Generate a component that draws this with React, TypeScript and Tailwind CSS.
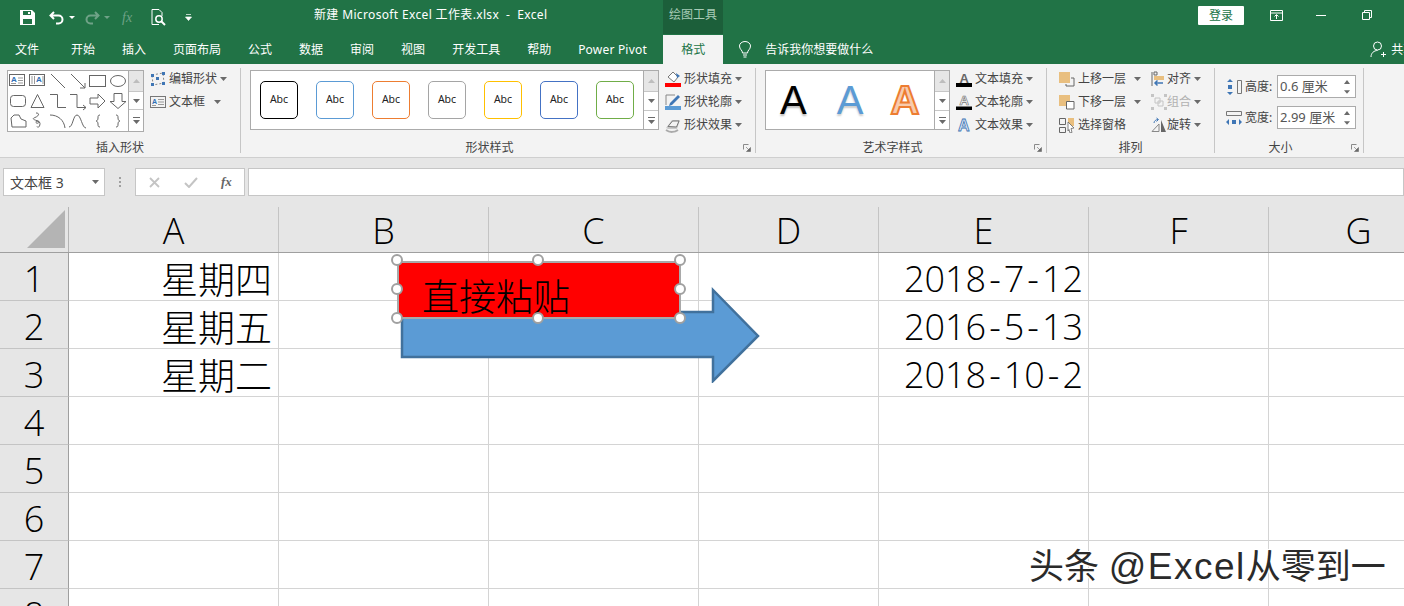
import type { ReactNode } from "react";

const ui = "font-['Noto_Sans','Noto_Sans_CJK_SC',sans-serif]";

function Caret({ className = "" }: { className?: string }) {
  return (
    <svg width="7" height="4" viewBox="0 0 7 4" className={`shrink-0 ${className}`}>
      <path d="M0 0h7L3.5 4z" fill="#6a6a6a" />
    </svg>
  );
}

function TabLabel({ children, className = "" }: { children: ReactNode; className?: string }) {
  return <span className={`shrink-0 text-[12px] text-white whitespace-nowrap ${className}`}>{children}</span>;
}

function TitleBar() {
  return (
    <div className="flex h-[35px] items-start bg-[#217346] text-white">
      <div className="flex w-[314px] shrink-0 items-center pl-[20px] pt-[9px]">
        <svg width="15" height="15" viewBox="0 0 15 15">
          <path d="M0 0h12l3 3v12H0z" fill="#fff" />
          <path d="M3 1h8v4H3zM3 9h9v5H3z" fill="#217346" />
          <path d="M8 2h2v2H8z" fill="#fff" />
        </svg>
        <svg width="16" height="14" viewBox="0 0 16 14" className="ml-[14px]">
          <path d="M5 1 1.5 4.5 5 8M2 4.5h7.5a4 4 0 0 1 0 8H7" fill="none" stroke="#fff" strokeWidth="2" />
        </svg>
        <svg width="6" height="3" viewBox="0 0 6 3" className="ml-[4px]">
          <path d="M0 0h6L3 3z" fill="#fff" />
        </svg>
        <svg width="16" height="14" viewBox="0 0 16 14" className="ml-[9px]">
          <path d="M11 1l3.5 3.5L11 8M14 4.500H6.500a4 4 0 0 0 0 8H9" fill="none" stroke="#6fa287" strokeWidth="2" />
        </svg>
        <svg width="6" height="3" viewBox="0 0 6 3" className="ml-[4px]">
          <path d="M0 0h6L3 3z" fill="#6fa287" />
        </svg>
        <span className="ml-[12px] w-[14px] font-['Liberation_Serif',serif] text-[14px] italic leading-[15px] text-[#6fa287]">fx</span>
        <svg width="16" height="17" viewBox="0 0 16 17" className="ml-[15px]">
          <path d="M1 .5h7l3 3V7M1 .5v15h7" fill="none" stroke="#fff" />
          <circle cx="8" cy="10" r="3.200" fill="none" stroke="#fff" strokeWidth="1.500" />
          <path d="m10.500 12.500 3.500 3.500" stroke="#fff" strokeWidth="2" />
        </svg>
        <svg width="7" height="7" viewBox="0 0 7 7" className="ml-[18px]">
          <path d="M1 .5h5M.5 3h6L3.500 6.500z" fill="#fff" stroke="#fff" strokeWidth=".7" />
        </svg>
      </div>
      <div className="w-[349px] shrink-0 whitespace-nowrap pt-[6px] text-[12px] leading-[18px] tracking-[0.35px]">
        新建 Microsoft Excel 工作表.xlsx&nbsp; -&nbsp; Excel
      </div>
      <div className="flex h-[34px] w-[60px] shrink-0 justify-center bg-[#1c5f3a] pt-[6px] text-[12px] leading-[18px] text-[#a8cbb7]">
        绘图工具
      </div>
      <div className="flex flex-1 items-start pl-[475px] pt-[6px]">
        <div className="flex h-[19px] w-[46px] shrink-0 items-center justify-center rounded-[1px] bg-white text-[12px] text-[#217346]">
          登录
        </div>
        <svg width="13" height="11" viewBox="0 0 13 11" className="ml-[26px] mt-[4px] shrink-0">
          <path d="M.5.500h12v10H.500zM.5 3h12M6.500 9V5M4.500 6.500l2-2 2 2" fill="none" stroke="#fff" />
        </svg>
        <div className="ml-[33px] mt-[9px] h-px w-[10px] shrink-0 bg-white" />
        <svg width="10" height="10" viewBox="0 0 10 10" className="ml-[36px] mt-[4px] shrink-0">
          <path d="M.5 2.500h7v7h-7zM2.500 2.500v-2h7v7h-2" fill="none" stroke="#fff" />
        </svg>
      </div>
    </div>
  );
}

function TabBar() {
  const tabs = ["开始", "插入", "页面布局", "公式", "数据", "审阅", "视图", "开发工具", "帮助"];
  return (
    <div className="flex h-[29px] items-center overflow-hidden bg-[#217346]">
      <TabLabel className="ml-[15px] mr-[32px]">文件</TabLabel>
      <div className="flex shrink-0 gap-[27px]">
        {tabs.map((t) => (
          <TabLabel key={t}>{t}</TabLabel>
        ))}
        <TabLabel className="w-[69px] tracking-[0.2px]">Power Pivot</TabLabel>
      </div>
      <div className="ml-[16px] flex h-full w-[60px] shrink-0 items-center justify-center bg-[#f3f3f3] text-[12px] text-[#217346]">
        格式
      </div>
      <svg width="14" height="17" viewBox="0 0 14 17" className="ml-[15px] shrink-0">
        <path d="M4.500 12c0-3-3-3.500-3-7a5.500 4.500 0 0 1 11 0c0 3.500-3 4-3 7zM5 14h4M5.500 16h3" fill="none" stroke="#fff" />
      </svg>
      <TabLabel className="ml-[13px]">告诉我你想要做什么</TabLabel>
      <svg width="17" height="17" viewBox="0 0 17 17" className="ml-[497px] shrink-0">
        <circle cx="7.500" cy="5" r="4" fill="none" stroke="#fff" />
        <path d="M1 16c0-4 3-6.500 6.500-6.500M11 13.500h5M13.500 11v5" fill="none" stroke="#fff" />
      </svg>
      <TabLabel className="ml-[4px]">共享</TabLabel>
    </div>
  );
}

function Group({
  width,
  label,
  launcher,
  children,
}: {
  width: string;
  label: string;
  launcher?: boolean;
  children: ReactNode;
}) {
  return (
    <div className={`relative mt-[4px] flex h-[85px] shrink-0 flex-col border-r border-[#c6c6c6] ${width}`}>
      <div className="flex flex-1 items-start pt-[2px]">{children}</div>
      <div className={`h-[16px] text-center text-[12px] leading-[22px] text-[#444] ${launcher ? "pr-[17px]" : ""}`}>
        {label}
      </div>
      {launcher && (
        <svg width="8" height="8" viewBox="0 0 8 8" className="absolute bottom-[1px] right-[4px]">
          <path d="M.5 5.500v-5h5" fill="none" stroke="#8a8a8a" />
          <path d="M3 3l3.500 3.500M7.500 3.500v4h-4z" fill="#6a6a6a" stroke="#6a6a6a" strokeWidth=".6" />
        </svg>
      )}
    </div>
  );
}

function ScrollColumn({ tall }: { tall?: boolean }) {
  return (
    <div className="flex w-[15px] shrink-0 flex-col self-stretch border-l border-[#ababab] bg-white">
      <div className="flex h-[21px] items-center justify-center border-b border-[#c6c6c6] bg-[#e6e6e6]">
        <svg width="7" height="4" viewBox="0 0 7 4">
          <path d="M0 4h7L3.500 0z" fill="#bdbdbd" />
        </svg>
      </div>
      <div className={`flex items-center justify-center border-b border-[#c6c6c6] ${tall ? "h-[19px]" : "h-[18px]"}`}>
        <Caret />
      </div>
      <div className="flex flex-1 flex-col items-center justify-center gap-[2px]">
        <div className="h-px w-[7px] bg-[#6a6a6a]" />
        <Caret />
      </div>
    </div>
  );
}

const lineProps = { fill: "none", stroke: "#666", strokeWidth: 1 };

const shapeIcons: ReactNode[] = [
  <>
    <rect x="1.500" y="3.500" width="15" height="11" fill="none" stroke="#666" />
    <text x="3" y="11" fontSize="8" fontWeight="700" fill="#2f6fb5" fontFamily="Liberation Sans">A</text>
    <path d="M10 7h5M10 9.500h5M10 12h5M3 12.500h5" stroke="#999" />
  </>,
  <>
    <rect x="1.500" y="3.500" width="15" height="11" fill="none" stroke="#666" />
    <text x="8" y="11" fontSize="8" fontWeight="700" fill="#2f6fb5" fontFamily="Liberation Sans">A</text>
    <path d="M4 5v8M6.500 5v8M15 5v8" stroke="#999" />
  </>,
  <path d="M3 3l14 14" {...lineProps} />,
  <path d="M3 3l14 14M17 12v5h-5" {...lineProps} />,
  <rect x="1.500" y="4.500" width="16" height="11" {...lineProps} />,
  <ellipse cx="10" cy="10" rx="7.500" ry="5.500" {...lineProps} />,
  <rect x="2.500" y="4.500" width="15" height="11" rx="3" {...lineProps} />,
  <path d="M9.500 3.500 16 16.500H3z" {...lineProps} />,
  <path d="M2 3.500h7.500v13H18" {...lineProps} />,
  <path d="M2 3.500h7v13h9M15 14l3 2.500-3 2.500" {...lineProps} />,
  <path d="M2 7h8V3l7 7-7 7v-4H2z" {...lineProps} />,
  <path d="M6 2.500h8v8h4l-8 7-8-7h4z" {...lineProps} />,
  <path d="M3 7l3-3h5l2 4 5 2v6H4z" {...lineProps} />,
  <path d="M8 2c4 0 3 3-1 4.500s0 2.500 3 3.500-1 3.500-2 1.500 4-2 4 1-2 5-3 3" {...lineProps} />,
  <path d="M2 4c8 0 14 5 15 13" {...lineProps} />,
  <path d="M1 16c4 0 4-12 8-12s5 13 9 13" {...lineProps} />,
  <path d="M12 4c-2 0-2 1-2 3s-1 3-2 3c1 0 2 1 2 3s0 3 2 3" {...lineProps} />,
  <path d="M8 4c2 0 2 1 2 3s1 3 2 3c-1 0-2 1-2 3s0 3-2 3" {...lineProps} />,
];

function Command({ icon, label, caretGap, muted }: { icon: ReactNode; label: string; caretGap: string; muted?: boolean }) {
  return (
    <div className="flex h-[23px] items-center">
      <div className="flex w-[16px] shrink-0 justify-center">{icon}</div>
      <span className={`ml-[3px] whitespace-nowrap text-[12px] ${muted ? "text-[#b1b1b1]" : "text-[#444]"}`}>{label}</span>
      <Caret className={caretGap} />
    </div>
  );
}

function Icon16({ children }: { children: ReactNode }) {
  return (
    <svg width="16" height="16" viewBox="0 0 16 16">
      {children}
    </svg>
  );
}

const letter = { fontFamily: "Liberation Sans", fontWeight: 700, fontSize: 13 };

function InsertShapes() {
  return (
    <>
      <div className="ml-[7px] flex h-[62px] w-[137px] shrink-0 border border-[#ababab] bg-white">
        <div className="grid w-[121px] grid-cols-[repeat(6,20px)] grid-rows-[repeat(3,20px)]">
          {shapeIcons.map((icon, i) => (
            <svg key={i} width="20" height="20" viewBox="0 0 20 20">
              {icon}
            </svg>
          ))}
        </div>
        <ScrollColumn />
      </div>
      <div className="ml-[6px] -mt-[3px] flex flex-col">
        <Command
          label="编辑形状"
          caretGap="ml-[3px]"
          icon={
            <Icon16>
              <path d="M2 4l11-2 1 10-11 2z" fill="none" stroke="#888" strokeDasharray="2 2" />
              <path d="M1 3h3v3H1zM12 1h3v3h-3zM12 11h3v3h-3zM1 12h3v3H1zM6 6h3v3H6z" fill="#3f76b5" />
            </Icon16>
          }
        />
        <Command
          label="文本框"
          caretGap="ml-[9px]"
          icon={
            <Icon16>
              <rect x=".5" y="2.500" width="15" height="11" fill="none" stroke="#777" />
              <text x="2" y="9.500" fontSize="7" fontWeight="700" fill="#2f6fb5" fontFamily="Liberation Sans">A</text>
              <path d="M8 5.500h6M8 8h6M8 10.500h6M2 11.500h4" stroke="#999" />
            </Icon16>
          }
        />
      </div>
    </>
  );
}

function ShapeStyles() {
  const borders = [
    "border-black",
    "border-[#5b9bd5]",
    "border-[#ed7d31]",
    "border-[#a5a5a5]",
    "border-[#ffc000]",
    "border-[#4472c4]",
    "border-[#70ad47]",
  ];
  return (
    <>
      <div className="ml-[9px] flex h-[60px] w-[409px] shrink-0 border border-[#ababab] bg-white">
        <div className="flex flex-1 items-center gap-[18px] pl-[9px]">
          {borders.map((b) => (
            <div
              key={b}
              className={`flex h-[38px] w-[38px] items-center justify-center rounded-[5px] border text-[10.500px] text-[#222] ${b}`}
            >
              Abc
            </div>
          ))}
        </div>
        <ScrollColumn tall />
      </div>
      <div className="ml-[6px] -mt-[3px] flex flex-col">
        <Command
          label="形状填充"
          caretGap="ml-[3px]"
          icon={
            <Icon16>
              <path d="M3 6l5-5 5 5-4 5z" fill="#fff" stroke="#777" />
              <path d="M11 2l4 3-3 2z" fill="#3f76b5" />
              <path d="M0 12h16v4H0z" fill="#f00" />
            </Icon16>
          }
        />
        <Command
          label="形状轮廓"
          caretGap="ml-[3px]"
          icon={
            <Icon16>
              <path d="M1 1h9M1 1v10" stroke="#888" fill="none" />
              <path d="M5 9l8-8 2 2-8 8-3 1z" fill="#3f76b5" />
              <path d="M0 12h16v4H0z" fill="#5b9bd5" />
            </Icon16>
          }
        />
        <Command
          label="形状效果"
          caretGap="ml-[3px]"
          icon={
            <Icon16>
              <path d="M1 11 7 3h8l-3 9H3z" fill="#c9c9c9" />
              <path d="M3 9.500 7.500 4H14l-2.500 6z" fill="#f4f4f4" stroke="#777" />
              <path d="M1 13c4 3 9 2 12 0" stroke="#aaa" fill="none" strokeWidth="2" />
            </Icon16>
          }
        />
      </div>
    </>
  );
}

function WordArt() {
  return (
    <>
      <div className="ml-[9px] flex h-[60px] w-[185px] shrink-0 border border-[#ababab] bg-white">
        <div className="flex flex-1 items-center font-['Liberation_Sans',sans-serif] text-[40px] leading-none">
          <span className="ml-[14px] text-black [text-shadow:0_2px_2px_#bbb]">A</span>
          <span className="ml-[30px] text-[#5b9bd5] [text-shadow:0_2px_2px_#ccc]">A</span>
          <span className="ml-[27px] font-bold text-[#f8cbad] [-webkit-text-stroke:2px_#ed7d31]">A</span>
        </div>
        <ScrollColumn tall />
      </div>
      <div className="ml-[6px] -mt-[3px] flex flex-col">
        <Command
          label="文本填充"
          caretGap="ml-[3px]"
          icon={
            <Icon16>
              <text x="3.500" y="11.500" {...letter} fill="#666">A</text>
              <path d="M0 12h16v4H0z" fill="#000" />
            </Icon16>
          }
        />
        <Command
          label="文本轮廓"
          caretGap="ml-[3px]"
          icon={
            <Icon16>
              <text x="3.500" y="11" {...letter} fill="#fff" stroke="#777" strokeWidth=".7">A</text>
              <path d="M0 12.500h16v3.500H0z" fill="#000" />
            </Icon16>
          }
        />
        <Command
          label="文本效果"
          caretGap="ml-[3px]"
          icon={
            <Icon16>
              <text x="2" y="14" fontFamily="Liberation Sans" fontWeight="700" fontSize="16" fill="#dbe7f5" stroke="#3f76b5" strokeWidth=".8">A</text>
            </Icon16>
          }
        />
      </div>
    </>
  );
}

function Arrange() {
  return (
    <>
      <div className="ml-[12px] -mt-[3px] flex w-[92px] shrink-0 flex-col">
        <Command
          label="上移一层"
          caretGap="ml-[8px]"
          icon={
            <Icon16>
              <path d="M0 1h11v11H0z" fill="#e9bf7f" />
              <path d="M12 7h3v8H7v-2" fill="none" stroke="#666" />
            </Icon16>
          }
        />
        <Command
          label="下移一层"
          caretGap="ml-[8px]"
          icon={
            <Icon16>
              <path d="M0 1h11v11H0z" fill="#e9bf7f" />
              <path d="M7.500 7.500h7.500v7.500H7.500z" fill="#fff" stroke="#666" />
            </Icon16>
          }
        />
        <Command
          label="选择窗格"
          caretGap="hidden"
          icon={
            <Icon16>
              <path d="M.5 1.500h6v6h-6zM.5 10.500h6v5h-6z" fill="none" stroke="#666" />
              <path d="M9 1h6v8H9z" fill="#e9bf7f" />
              <path d="M9 5l6 6-3 .5 1 4-2 .5-1-3.500-1 1.500z" fill="#fff" stroke="#666" strokeWidth=".8" />
            </Icon16>
          }
        />
      </div>
      <div className="-mt-[3px] flex flex-col">
        <CompactCommand
          label="对齐"
          icon={
            <Icon16>
              <path d="M1 1v14M3 1h3v3H3z" fill="none" stroke="#666" />
              <path d="M3 5h10v4H3z" fill="#e9bf7f" />
              <path d="M12 12H4M6.500 9.500 4 12l2.500 2.500" fill="none" stroke="#3f76b5" strokeWidth="1.500" />
            </Icon16>
          }
        />
        <CompactCommand
          label="组合"
          muted
          icon={
            <Icon16>
              <path d="M0 0h3v3H0zM13 0h3v3h-3zM0 13h3v3H0zM13 13h3v3h-3z" fill="#c4c4c4" />
              <path d="M4 4h5v5H4zM7 7h5v5H7z" fill="none" stroke="#c4c4c4" />
            </Icon16>
          }
        />
        <CompactCommand
          label="旋转"
          icon={
            <Icon16>
              <path d="M1 14.500 8 7v7.500z" fill="none" stroke="#888" />
              <path d="M10 3l5 12h-5z" fill="#666" />
              <path d="M3 6c0-2 2-3.500 4-3.500M5.500 1 7.500 2.500 5.500 4.500" fill="none" stroke="#3f76b5" />
            </Icon16>
          }
        />
      </div>
    </>
  );
}

function CompactCommand({ icon, label, muted }: { icon: ReactNode; label: string; muted?: boolean }) {
  return (
    <div className="flex h-[23px] items-center">
      <div className="flex w-[16px] shrink-0 justify-center">{icon}</div>
      <span className={`whitespace-nowrap text-[12px] ${muted ? "text-[#b1b1b1]" : "text-[#444]"}`}>{label}</span>
      <Caret className="ml-[3px]" />
    </div>
  );
}

function SizeField({ icon, label, value }: { icon: ReactNode; label: string; value: string }) {
  return (
    <div className="flex h-[23px] items-center">
      <div className="w-[16px] shrink-0">{icon}</div>
      <span className="ml-[3px] w-[32px] shrink-0 whitespace-nowrap text-[12px] text-[#444]">{label}</span>
      <div className="flex h-[23px] w-[79px] items-center justify-between border border-[#ababab] bg-white pl-[2px] pr-[5px] text-[13px] text-[#555]">
        <span className="whitespace-nowrap">{value}</span>
        <div className="flex flex-col gap-[6px]">
          <svg width="6" height="4" viewBox="0 0 6 4">
            <path d="M0 4h6L3 0z" fill="#6a6a6a" />
          </svg>
          <Caret className="w-[6px]" />
        </div>
      </div>
    </div>
  );
}

function Ribbon() {
  return (
    <div className={`flex h-[94px] items-start border-b border-[#cfcfcf] bg-[#f3f3f3] ${ui}`}>
      <Group width="w-[241px]" label="插入形状">
        <InsertShapes />
      </Group>
      <Group width="w-[515px]" label="形状样式" launcher>
        <ShapeStyles />
      </Group>
      <Group width="w-[291px]" label="艺术字样式" launcher>
        <WordArt />
      </Group>
      <Group width="w-[168px]" label="排列">
        <Arrange />
      </Group>
      <Group width="w-[149px]" label="大小" launcher>
        <div className="ml-[11px] mt-[5px] flex flex-col gap-[8px]">
          <SizeField
            label="高度:"
            value="0.6 厘米"
            icon={
              <Icon16>
                <path d="M11.500 1.500h4v13h-4z" fill="none" stroke="#777" />
                <path d="M4 0 1 3h6zM4 16l-3-3h6zM2 6h4v4H2z" fill="#3f76b5" />
              </Icon16>
            }
          />
          <SizeField
            label="宽度:"
            value="2.99 厘米"
            icon={
              <Icon16>
                <path d="M.5 1.500h15v4H.500z" fill="none" stroke="#777" />
                <path d="M0 12l3-3v6zM16 12l-3-3v6zM6 10h4v4H6z" fill="#3f76b5" />
              </Icon16>
            }
          />
        </div>
      </Group>
    </div>
  );
}

function FormulaBar() {
  return (
    <div className={`flex h-[28px] items-stretch bg-[#e6e6e6] ${ui}`}>
      <div className="ml-[3px] flex w-[102px] items-center justify-between border border-[#c6c6c6] bg-white pl-[6px] pr-[5px] text-[14px] text-[#444]">
        <span className="whitespace-nowrap">文本框 3</span>
        <Caret />
      </div>
      <div className="flex w-[30px] flex-col items-center justify-center gap-[2px]">
        <div className="h-[2px] w-[2px] bg-[#a0a0a0]" />
        <div className="h-[2px] w-[2px] bg-[#a0a0a0]" />
        <div className="h-[2px] w-[2px] bg-[#a0a0a0]" />
      </div>
      <div className="flex w-[110px] items-center border border-[#c6c6c6] bg-white pl-[13px]">
        <svg width="11" height="11" viewBox="0 0 11 11">
          <path d="M1 1l9 9M10 1l-9 9" stroke="#c4c4c4" strokeWidth="1.800" />
        </svg>
        <svg width="14" height="11" viewBox="0 0 14 11" className="ml-[24px]">
          <path d="M1 6l4 4 8-9" fill="none" stroke="#c4c4c4" strokeWidth="2" />
        </svg>
        <span className="ml-[23px] font-['Liberation_Serif',serif] text-[13px] font-bold italic text-[#666]">fx</span>
      </div>
      <div className="ml-[3px] flex-1 border border-[#c6c6c6] bg-white" />
    </div>
  );
}

const columns = [
  { name: "A", width: "w-[210px]" },
  { name: "B", width: "w-[210px]" },
  { name: "C", width: "w-[210px]" },
  { name: "D", width: "w-[180px]" },
  { name: "E", width: "w-[210px]" },
  { name: "F", width: "w-[180px]" },
  { name: "G", width: "w-[180px]" },
];

const cellData: Record<number, Record<string, string>> = {
  1: { A: "星期四", E: "2018-7-12" },
  2: { A: "星期五", E: "2016-5-13" },
  3: { A: "星期二", E: "2018-10-2" },
};

const latin = "font-['Open_Sans',sans-serif] font-light";

function CellText({ value }: { value: string }) {
  // dates keep wider dashes, like the sheet font
  if (/^\d/.test(value)) {
    const parts = value.split("-");
    return (
      <span className={`flex pr-[5px] pt-[4px] ${latin}`}>
        {parts.map((p, i) => (
          <span key={i} className="flex">
            {i > 0 && <span className="mx-[3px]">-</span>}
            {p}
          </span>
        ))}
      </span>
    );
  }
  return <span className="pr-[6px] pt-[3px] text-[37px] font-light">{value}</span>;
}

function Sheet() {
  const rows = [1, 2, 3, 4, 5, 6, 7, 8];
  return (
    <div className="relative flex-1 overflow-hidden bg-white font-['Noto_Sans_CJK_SC',sans-serif] text-[36px] text-black">
      <div className="flex h-[46px] w-[1500px] border-b border-[#9f9f9f] bg-[#e6e6e6]">
        <div className="flex h-full w-[69px] shrink-0 border-r border-[#b4b4b4]">
          <svg width="68" height="45" viewBox="0 0 68 45">
            <path d="M65 3v38H27z" fill="#b4b4b4" />
          </svg>
        </div>
        {columns.map((c) => (
          <div
            key={c.name}
            className={`flex h-full shrink-0 items-center justify-center border-r border-[#c4c4c4] pt-[3px] leading-none ${latin} ${c.width}`}
          >
            {c.name}
          </div>
        ))}
      </div>
      {rows.map((r) => (
        <div key={r} className="flex h-[48px] w-[1500px]">
          <div className={`flex w-[69px] shrink-0 items-center justify-center border-b border-r border-b-[#c4c4c4] border-r-[#9f9f9f] bg-[#e6e6e6] pt-[5px] leading-none ${latin}`}>
            {r}
          </div>
          {columns.map((c) => (
            <div
              key={c.name}
              className={`flex shrink-0 items-center justify-end whitespace-nowrap border-b border-r border-[#d4d4d4] leading-none ${c.width}`}
            >
              {cellData[r]?.[c.name] && <CellText value={cellData[r][c.name]} />}
            </div>
          ))}
        </div>
      ))}

      {/* arrow and selected text box float over the cells */}
      <svg width="364" height="97" viewBox="0 0 364 97" className="absolute left-[398px] top-[79px]">
        <path d="M4 26h311V4l45 46-45 45V71H4z" fill="#5b9bd5" stroke="#41719c" strokeWidth="2.500" />
      </svg>
      <div className="absolute left-[397px] top-[54px] flex h-[58px] w-[284px] items-center border-2 border-[#a9a9a9] bg-[#f00] pl-[23px] pt-[11px] text-[37px] font-light leading-none">
        直接粘贴
        <Handle className="left-[-8px] top-[-9px]" />
        <Handle className="left-[133px] top-[-9px]" />
        <Handle className="left-[275px] top-[-9px]" />
        <Handle className="left-[-8px] top-[20px]" />
        <Handle className="left-[275px] top-[20px]" />
        <Handle className="left-[-8px] top-[49px]" />
        <Handle className="left-[133px] top-[49px]" />
        <Handle className="left-[275px] top-[49px]" />
      </div>

      <div className="absolute left-[1029px] top-[338px] whitespace-nowrap font-['Liberation_Sans','Noto_Sans_CJK_SC',sans-serif] text-[35px] leading-[44px] text-[#2a2a2a] [text-shadow:1px_1px_0_#fff,-1px_-1px_0_#fff,1px_-1px_0_#fff,-1px_1px_0_#fff]">
        头条 <span className="text-[37px] tracking-[1.500px]">@Excel</span>从零到一
      </div>
    </div>
  );
}

function Handle({ className }: { className: string }) {
  return <div className={`absolute h-[12px] w-[12px] rounded-full border-2 border-[#a0a0a0] bg-white ${className}`} />;
}

export default function App() {
  return (
    <div className={`flex h-[606px] w-[1404px] flex-col overflow-hidden bg-[#e6e6e6] ${ui}`}>
      <TitleBar />
      <TabBar />
      <Ribbon />
      <div className="h-[10px] shrink-0" />
      <FormulaBar />
      <div className="h-[11px] shrink-0" />
      <Sheet />
    </div>
  );
}
